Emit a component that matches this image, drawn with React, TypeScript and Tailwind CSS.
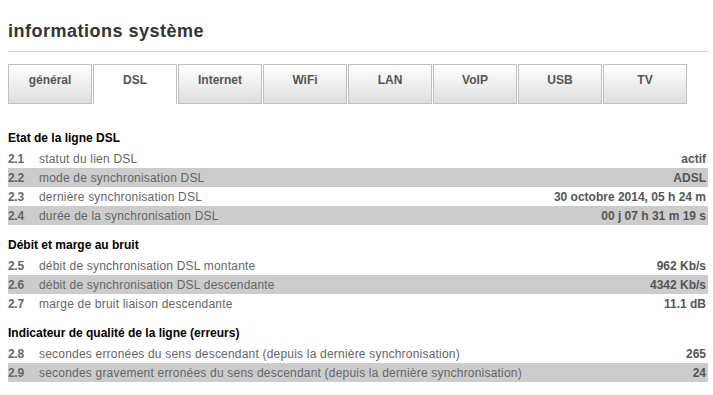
import React from "react";

// Tabs across the top of the system info page
const tabs = ["général", "DSL", "Internet", "WiFi", "LAN", "VoIP", "USB", "TV"];

interface Row {
    num: string;
    label: string;
    value: string;
}

interface Section {
    title: string;
    rows: Row[];
}

const sections: Section[] = [
    {
        title: "Etat de la ligne DSL",
        rows: [
            { num: "2.1", label: "statut du lien DSL", value: "actif" },
            { num: "2.2", label: "mode de synchronisation DSL", value: "ADSL" },
            { num: "2.3", label: "dernière synchronisation DSL", value: "30 octobre 2014, 05 h 24 m" },
            { num: "2.4", label: "durée de la synchronisation DSL", value: "00 j 07 h 31 m 19 s" },
        ],
    },
    {
        title: "Débit et marge au bruit",
        rows: [
            { num: "2.5", label: "débit de synchronisation DSL montante", value: "962 Kb/s" },
            { num: "2.6", label: "débit de synchronisation DSL descendante", value: "4342 Kb/s" },
            { num: "2.7", label: "marge de bruit liaison descendante", value: "11.1 dB" },
        ],
    },
    {
        title: "Indicateur de qualité de la ligne (erreurs)",
        rows: [
            { num: "2.8", label: "secondes erronées du sens descendant (depuis la dernière synchronisation)", value: "265" },
            { num: "2.9", label: "secondes gravement erronées du sens descendant (depuis la dernière synchronisation)", value: "24" },
        ],
    },
];

const App: React.FC = () => {
    return (
        <div className="w-[713px] h-[395px] bg-white px-[8px] font-['Liberation_Sans',Arial,sans-serif] overflow-hidden">
            <h1 className="pt-[20px] text-[18px] leading-[22px] font-bold text-[#333] tracking-[0.5px]">
                informations système
            </h1>
            <div className="mt-[9px] h-px w-[700px] bg-[#d2d2d2]" />

            {/* tab bar */}
            <div className="mt-[12px] flex gap-[1px]">
                {tabs.map((tab) =>
                    tab === "DSL" ? (
                        <div
                            key={tab}
                            className="w-[84px] h-[40px] border border-b-0 border-[#c0c0c0] bg-white text-center pt-[7px] text-[12px] leading-[16px] font-bold text-[#555]"
                        >
                            {tab}
                        </div>
                    ) : (
                        <div
                            key={tab}
                            className="w-[84px] h-[40px] border border-[#c0c0c0] bg-linear-to-b from-white to-[#dedede] text-center pt-[7px] text-[12px] leading-[16px] font-bold text-[#555]"
                        >
                            {tab}
                        </div>
                    )
                )}
            </div>

            <div className="mt-[26px] w-[700px]">
                {sections.map((section, i) => (
                    <div key={section.title} className={i > 0 ? "mt-[12px]" : ""}>
                        <div className="h-[16px] mb-[3px] text-[12px] leading-[16px] font-bold text-black">
                            {section.title}
                        </div>
                        {section.rows.map((row, j) => (
                            <div
                                key={row.num}
                                className={`flex h-[19px] pt-[2px] text-[12px] leading-[17px] ${j % 2 === 1 ? "bg-[#cccccc]" : ""}`}
                            >
                                <span className="w-[31px] shrink-0 font-bold text-[#666] tracking-[-0.3px]">{row.num}</span>
                                <span className="flex-1 text-[#666] tracking-[0.2px] whitespace-nowrap">{row.label}</span>
                                <span className="pr-[2px] font-bold text-[#555] whitespace-nowrap">{row.value}</span>
                            </div>
                        ))}
                    </div>
                ))}
            </div>
        </div>
    );
};

export default App;
